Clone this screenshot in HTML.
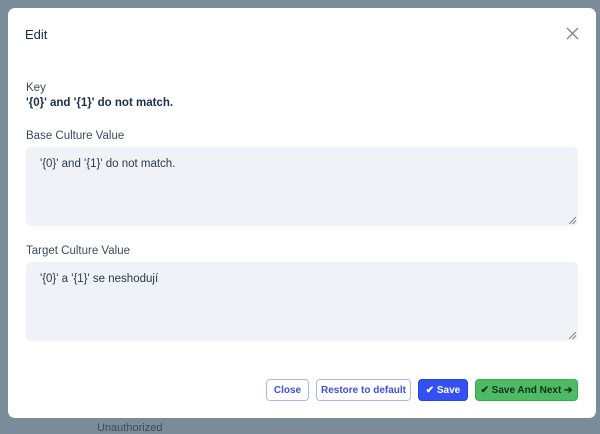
<!DOCTYPE html>
<html><head><style>
body{margin:0;width:600px;height:429px;background:#7a8b99;font-family:"Liberation Sans",sans-serif;position:relative;overflow:hidden}
.bgt{position:absolute;color:#3a4a5a;font-size:11px}
.modal{position:absolute;left:8px;top:8px;width:588px;height:410px;background:#fff;border-radius:7px}
.title{position:absolute;left:17px;top:19px;font-size:13px;color:#1e2a3a}
.x{position:absolute;left:558px;top:19px}
.lbl{position:absolute;left:18px;font-size:11.5px;color:#3b4b5c}
.key{position:absolute;left:18px;top:89px;font-size:11.5px;font-weight:bold;color:#1a2d4a}
.ta{position:absolute;left:18px;width:552px;height:79px;background:#eff2f6;border-radius:5px;font-size:11.5px;color:#2a3a4a;box-sizing:border-box;padding:11px 14px}
.grip{position:absolute;right:2px;bottom:2px;width:7px;height:7px;background:linear-gradient(135deg,transparent 45%,#888 45%,#888 55%,transparent 55%,transparent 70%,#888 70%,#888 80%,transparent 80%)}
.btn{position:absolute;top:371px;height:22px;box-sizing:border-box;border-radius:4px;font-size:10px;font-weight:bold;display:flex;align-items:center;justify-content:center}
.o{border:1px solid #a9b4ff;color:#3d50e0;background:#fff}
</style></head><body>
<div class="bgt" style="left:97px;top:422px">Unauthorized</div>
<div class="modal">
<div class="title">Edit</div>
<svg class="x" width="13" height="13" viewBox="0 0 13 13"><path d="M1 1L12 12M12 1L1 12" stroke="#7a8696" stroke-width="1.3"/></svg>
<div class="lbl" style="top:74px">Key</div>
<div class="key">'{0}' and '{1}' do not match.</div>
<div class="lbl" style="top:122px">Base Culture Value</div>
<div class="ta" style="top:139px">'{0}' and '{1}' do not match.<div class="grip"></div></div>
<div class="lbl" style="top:237px">Target Culture Value</div>
<div class="ta" style="top:254px">'{0}' a '{1}' se neshodují<div class="grip"></div></div>
<div class="btn o" style="left:258px;width:43px">Close</div>
<div class="btn o" style="left:308px;width:95px">Restore to default</div>
<div class="btn" style="left:410px;width:50px;background:#3350f5;color:#fff;border:1px solid #2a44d8">✔ Save</div>
<div class="btn" style="left:467px;width:103px;background:#4cbb64;color:#10301a;border:1px solid #3aa852">✔ Save And Next ➔</div>
</div>
</body></html>
